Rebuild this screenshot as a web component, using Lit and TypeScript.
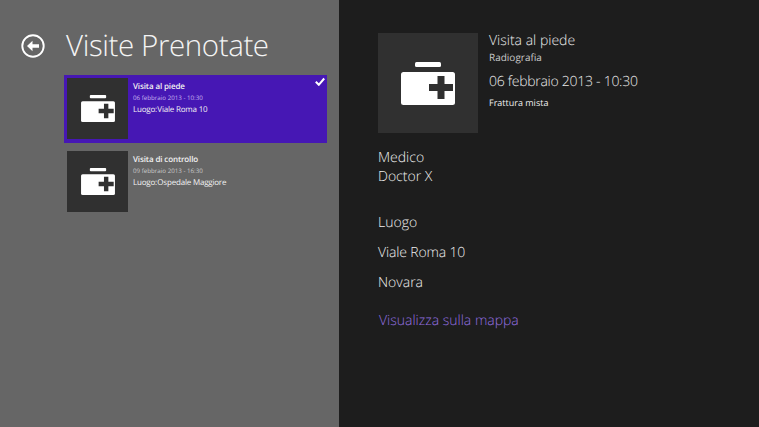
import { LitElement, html, css, svg } from "lit";
import { customElement } from "lit/decorators.js";

const kit = svg`<svg class="kit" viewBox="0 0 54 43" aria-hidden="true">
  <rect x="14" y="0" width="26" height="5" rx="1.500" fill="#fff"/>
  <rect x="0" y="10" width="54" height="33" rx="2.500" fill="#fff"/>
  <path d="M28 22h8.500v-8h7v8H52v7h-8.500v8h-7v-8H28z" fill="#303030"/>
</svg>`;

@customElement("app-root")
export class AppRoot extends LitElement {
  static styles = css`
    :host { display: grid; grid-template-columns: 339px 420px; width: 759px; height: 427px; overflow: hidden; font-family: "Open Sans", "Noto Sans", sans-serif; color: #fff; text-rendering: geometricPrecision; }
    .left { background: #666; display: flex; flex-direction: column; padding: 30px 12px 0 21px; }
    .head { display: flex; align-items: center; gap: 21px; height: 31px; }
    .back { width: 24px; height: 24px; display: block; flex: none; }
    h1 { margin: 0 0 3px; font-size: 29.500px; font-weight: 300; line-height: 31px; color: #f4f4f4; white-space: nowrap; letter-spacing: -.4px; }
    .list { display: flex; flex-direction: column; gap: 5px; margin: 14px 0 0 43px; }
    .card { position: relative; display: flex; gap: 5px; padding: 3px; height: 62px; width: 257px; }
    .card.sel { background: #4617b4; }
    .thumb { width: 61px; height: 61px; background: #303030; display: flex; align-items: center; justify-content: center; flex: none; }
    .kit { width: 34px; height: 27px; display: block; }
    .txt { padding-top: 3px; display: flex; flex-direction: column; }
    .t { font-size: 8px; line-height: 11px; font-weight: 600; color: #f2f2f2; letter-spacing: -.12px; }
    .d { font-size: 6.200px; line-height: 11px; color: #c9c9c9; }
    .sel .d { color: #c5b3ee; }
    .l { font-size: 8px; line-height: 11px; margin-top: 1px; color: #f2f2f2; letter-spacing: -.2px; }
    .k { word-spacing: -1.500px; }
    .check { position: absolute; top: 2px; right: 2px; width: 10px; height: 9px; }
    .right { background: #1d1d1d; padding: 33px 0 0 39px; display: flex; flex-direction: column; }
    .top { display: flex; gap: 11px; }
    .big { width: 100px; height: 100px; background: #303030; display: flex; align-items: center; justify-content: center; flex: none; }
    .big .kit { width: 54px; height: 43px; }
    .info { display: flex; flex-direction: column; color: #ececec; }
    .i1 { font-size: 14px; line-height: 14px; margin-top: 1px; font-weight: 300; }
    .i2 { font-size: 10px; line-height: 14px; margin-top: 2px; color: #c9c9c9; }
    .i3 { font-size: 14px; line-height: 18px; margin-top: 9px; font-weight: 300; letter-spacing: -.27px; }
    .i4 { font-size: 9px; line-height: 12px; margin-top: 6px; }
    .rows { display: flex; flex-direction: column; color: #f0f0f0; font-size: 14px; font-weight: 300; line-height: 18px; }
    .medico { margin-top: 16px; }
    .doc { margin-top: 1px; }
    .luogo { margin-top: 28px; }
    .via { margin-top: 12px; letter-spacing: -.15px; }
    .city { margin-top: 12px; }
    .link { margin: 20px 0 0 1px; color: #9470e0; }
  `;

  render() {
    return html`
      <section class="left">
        <div class="head">
          <svg class="back" viewBox="0 0 24 24" aria-hidden="true">
            <circle cx="12" cy="12" r="10.700" fill="none" stroke="#fff" stroke-width="1.900"/>
            <path d="M6 12l5.500-5.200v3.500H18v3.400h-6.500v3.500z" fill="#fff"/>
          </svg>
          <h1>Visite Prenotate</h1>
        </div>
        <div class="list">
          <div class="card sel">
            <div class="thumb">${kit}</div>
            <div class="txt">
              <div class="t">Visita al piede</div>
              <div class="d">06 febbraio 2013 - 10:30</div>
              <div class="l"><span class="k">Luogo: </span>Viale Roma 10</div>
            </div>
            <svg class="check" viewBox="0 0 10 9" aria-hidden="true"><path d="M.8 4.800l3 3 5.400-6.300" fill="none" stroke="#fff" stroke-width="2"/></svg>
          </div>
          <div class="card">
            <div class="thumb">${kit}</div>
            <div class="txt">
              <div class="t">Visita di controllo</div>
              <div class="d">09 febbraio 2013 - 16:30</div>
              <div class="l"><span class="k">Luogo: </span>Ospedale Maggiore</div>
            </div>
          </div>
        </div>
      </section>
      <section class="right">
        <div class="top">
          <div class="big">${kit}</div>
          <div class="info">
            <div class="i1">Visita al piede</div>
            <div class="i2">Radiografia</div>
            <div class="i3">06 febbraio 2013 - 10:30</div>
            <div class="i4">Frattura mista</div>
          </div>
        </div>
        <div class="rows">
          <div class="medico">Medico</div>
          <div class="doc">Doctor X</div>
          <div class="luogo">Luogo</div>
          <div class="via">Viale Roma 10</div>
          <div class="city">Novara</div>
          <div class="link">Visualizza sulla mappa</div>
        </div>
      </section>
    `;
  }
}
